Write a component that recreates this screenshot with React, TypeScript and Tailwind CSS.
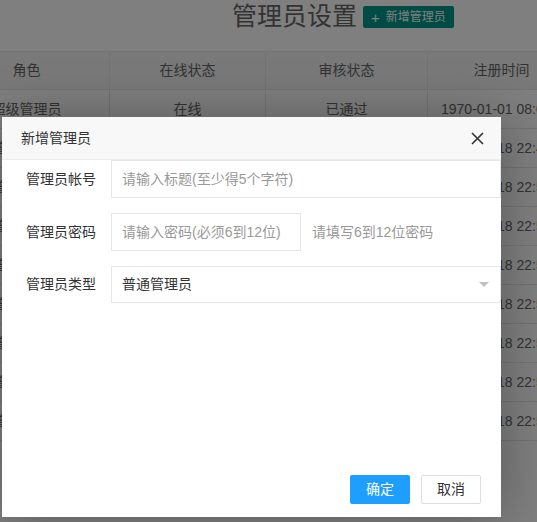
import React from 'react';

const rows = [
  { role: '超级管理员', online: '在线', audit: '已通过', time: '1970-01-01 08:00:00' },
  { role: '普通管理员', online: '离线', audit: '已通过', time: '2018-12-18 22:46:10' },
  { role: '普通管理员', online: '离线', audit: '已通过', time: '2018-12-18 22:51:32' },
  { role: '普通管理员', online: '离线', audit: '已通过', time: '2018-12-18 22:52:07' },
  { role: '普通管理员', online: '离线', audit: '已通过', time: '2018-12-18 22:53:41' },
  { role: '普通管理员', online: '离线', audit: '已通过', time: '2018-12-18 22:54:19' },
  { role: '普通管理员', online: '离线', audit: '已通过', time: '2018-12-18 22:55:03' },
  { role: '普通管理员', online: '离线', audit: '已通过', time: '2018-12-18 22:56:28' },
  { role: '普通管理员', online: '离线', audit: '已通过', time: '2018-12-18 22:57:45' },
];

const cols = 'grid grid-cols-[166px_156px_162px_148px]';

function FormRow({ label, children }: { label: string; children: React.ReactNode }) {
  return (
    <div className="flex items-center">
      <label className="w-[109px] shrink-0 pr-[15px] text-right text-[14px] text-[#333]">{label}</label>
      {children}
    </div>
  );
}

export default function App() {
  return (
    <div
      className="relative h-[522px] w-[537px] overflow-hidden bg-white"
      style={{ fontFamily: '"Liberation Sans", "Noto Sans CJK SC", sans-serif' }}
    >
      {/* page behind the layer */}
      <div className="flex h-[51px] items-start pl-[232px] pt-[1px]">
        <h1 className="text-[25px] leading-[30px] text-[#666]">管理员设置</h1>
        <button className="ml-[6px] mt-[5px] flex h-[22px] items-center gap-[6px] rounded-[2px] bg-[#009688] px-[8px] text-[12px] text-white">
          <span className="text-[15px] leading-none">+</span>
          新增管理员
        </button>
      </div>
      <div className="ml-[-56px] w-max text-[14px] text-[#666]">
        <div className={`${cols} h-[39px] border-y border-[#e6e6e6] bg-[#f2f2f2]`}>
          {['角色', '在线状态', '审核状态', '注册时间'].map((h) => (
            <div key={h} className="flex items-center justify-center border-r border-[#e6e6e6]">
              {h}
            </div>
          ))}
        </div>
        {rows.map((r, i) => (
          <div key={i} className={`${cols} h-[39px] border-b border-[#e6e6e6]`}>
            {[r.role, r.online, r.audit].map((c, j) => (
              <div key={j} className="flex items-center justify-center whitespace-nowrap border-r border-[#e6e6e6]">
                {c}
              </div>
            ))}
            <div className="flex items-center justify-center whitespace-nowrap border-r border-[#e6e6e6] pl-[9px]">
              {r.time}
            </div>
          </div>
        ))}
      </div>

      {/* shade */}
      <div className="absolute inset-0 bg-black/50" />

      {/* dialog */}
      <div className="absolute left-[2px] top-[117px] flex h-[400px] w-[499px] flex-col bg-white shadow-[1px_1px_50px_rgba(0,0,0,0.3)]">
        <div className="flex h-[43px] shrink-0 items-center justify-between border-b border-[#eee] bg-[#f8f8f8] pl-[19px] pr-[17px]">
          <span className="text-[14px] text-[#333]">新增管理员</span>
          <svg width="13" height="13" viewBox="0 0 13 13" className="text-[#333]">
            <path d="M1 1L12 12M12 1L1 12" stroke="currentColor" strokeWidth="1.6" />
          </svg>
        </div>
        <div className="flex flex-1 flex-col gap-[15px]">
          <FormRow label="管理员帐号">
            <input
              className="h-[38px] flex-1 border border-[#e6e6e6] px-[10px] text-[14px] outline-none placeholder:text-[#999]"
              placeholder="请输入标题(至少得5个字符)"
            />
          </FormRow>
          <FormRow label="管理员密码">
            <input
              className="h-[38px] w-[190px] border border-[#e6e6e6] px-[10px] text-[14px] outline-none placeholder:text-[#999]"
              placeholder="请输入密码(必须6到12位)"
            />
            <span className="ml-[11px] text-[14px] text-[#999]">请填写6到12位密码</span>
          </FormRow>
          <FormRow label="管理员类型">
            <div className="flex h-[37px] flex-1 items-center justify-between border border-[#e6e6e6] pl-[10px] pr-[11px] text-[14px] text-[#333]">
              普通管理员
              <svg width="10" height="5" viewBox="0 0 10 5">
                <path d="M0 0H10L5 5Z" fill="#c2c2c2" />
              </svg>
            </div>
          </FormRow>
        </div>
        <div className="flex justify-end gap-[11px] pb-[13px] pr-[20px]">
          <button className="h-[29px] w-[60px] rounded-[2px] bg-[#1E9FFF] text-[14px] text-white">确定</button>
          <button className="h-[29px] w-[60px] rounded-[2px] border border-[#dedede] bg-white text-[14px] text-[#333]">
            取消
          </button>
        </div>
      </div>
    </div>
  );
}
